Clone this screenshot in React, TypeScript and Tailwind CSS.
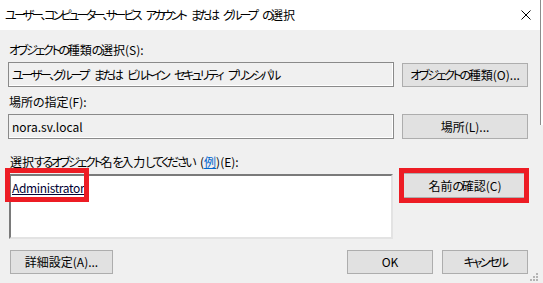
const btn =
  "flex items-center justify-center whitespace-nowrap border border-[#adadad] bg-[#e1e1e1] text-[12px] text-black";
const field =
  "flex items-center whitespace-nowrap border border-[#8a8a8a] bg-[#f0f0f0] pl-[3px] shadow-[inset_-1px_-1px_0_#ffffff]";

// kana and punctuation are narrow in the original UI font, kanji stay full width
function J({ t, tight }: { t: string; tight?: boolean }) {
  const parts = t.match(/[\u3000-\u30ff]+| +|[^\u3000-\u30ff ]+/g) ?? [];
  return (
    <>
      {parts.map((p, i) => {
        if (/[\u3000-\u30ff]/.test(p))
          return (
            <span key={i} className={tight ? "tracking-[-2.7px]" : "tracking-[-2.3px]"}>
              {p}
            </span>
          );
        if (p.trim() === "")
          return (
            <span key={i} className="tracking-[3px]">
              {p}
            </span>
          );
        return <span key={i}>{p}</span>;
      })}
    </>
  );
}

export default function App() {
  return (
    <div className="relative h-[283px] w-[543px] overflow-hidden bg-[#f0f0f0] font-['Noto_Sans_CJK_JP',sans-serif] text-[12px] leading-[16px] text-black [font-feature-settings:'palt']">
      {/* title bar */}
      <div className="flex h-[30px] items-center bg-white pl-[5px]">
        <span className="flex-1 whitespace-pre">
          <J tight t="ユーザー、コンピューター、サービス アカウント または グループ の選択" />
        </span>
        <svg width="10" height="10" viewBox="0 0 10 10" className="mr-[12px]">
          <path d="M0.5 0.5 L9.5 9.5 M9.5 0.5 L0.5 9.5" stroke="#000" strokeWidth="1" />
        </svg>
      </div>

      <div className="flex flex-col px-[8px] pt-[12px]">
        <div className="pl-px">
          <J t="オブジェクトの種類の選択(S):" />
        </div>
        <div className="mt-[4px] flex items-start">
          <div className={`${field} h-[25px] w-[386px] whitespace-pre`}>
            <J t="ユーザー、グループ または ビルトイン セキュリティ プリンシパル" />
          </div>
          <button className={`${btn} ml-[8px] mt-px h-[24px] w-[126px]`}>
            <J t="オブジェクトの種類(O)..." />
          </button>
        </div>

        <div className="mt-[7px] pl-px">場所の指定(F):</div>
        <div className="mt-[4px] flex items-start">
          <div className={`${field} h-[25px] w-[386px]`}>nora.sv.local</div>
          <button className={`${btn} ml-[8px] h-[25px] w-[126px]`}>場所(L)...</button>
        </div>

        <div className="mt-[15px] whitespace-pre pl-[2px]">
          <J t="選択するオブジェクト名を入力してください (" />
          <span className="text-[#0066cc] underline">例</span>)(E):
        </div>
        <div className="mt-[3px] flex items-start">
          <div className="ml-px mt-px h-[65px] w-[384px] border-2 border-t-[#7a7a7a] border-l-[#7a7a7a] border-r-[#e3e3e3] border-b-[#e3e3e3] bg-white pl-px pt-[4px]">
            <span className="tracking-[-0.35px] text-[#000033] underline">Administrator</span>
          </div>
          <button className={`${btn} ml-[9px] h-[25px] w-[126px]`}>
            <J t="名前の確認(C)" />
          </button>
        </div>

        <div className="mt-[11px] flex items-start">
          <button className={`${btn} ml-[2px] h-[24px] w-[103px]`}>詳細設定(A)...</button>
          <button className={`${btn} ml-auto h-[24px] w-[86px]`}>OK</button>
          <button className={`${btn} ml-[9px] mr-[7px] h-[24px] w-[86px]`}>
            <J t="キャンセル" />
          </button>
        </div>
      </div>

      {/* annotation boxes */}
      <div className="absolute left-[5px] top-[168px] h-[34px] w-[84px] border-[5px] border-[#ed1c24]" />
      <div className="absolute left-[399px] top-[168px] h-[35px] w-[130px] border-[5px] border-[#ed1c24]" />

      {/* edge of window behind */}
      <div className="absolute left-[540px] top-0 h-[125px] w-[3px] border-l border-[#8c8c8c] bg-white" />

      {/* size grip */}
      <svg width="8" height="8" viewBox="0 0 8 8" className="absolute bottom-[2px] right-[5px]">
        <g fill="#b4b4b4">
          <rect x="6" y="0" width="2" height="2" />
          <rect x="3" y="3" width="2" height="2" />
          <rect x="6" y="3" width="2" height="2" />
          <rect x="0" y="6" width="2" height="2" />
          <rect x="3" y="6" width="2" height="2" />
          <rect x="6" y="6" width="2" height="2" />
        </g>
      </svg>
    </div>
  );
}
